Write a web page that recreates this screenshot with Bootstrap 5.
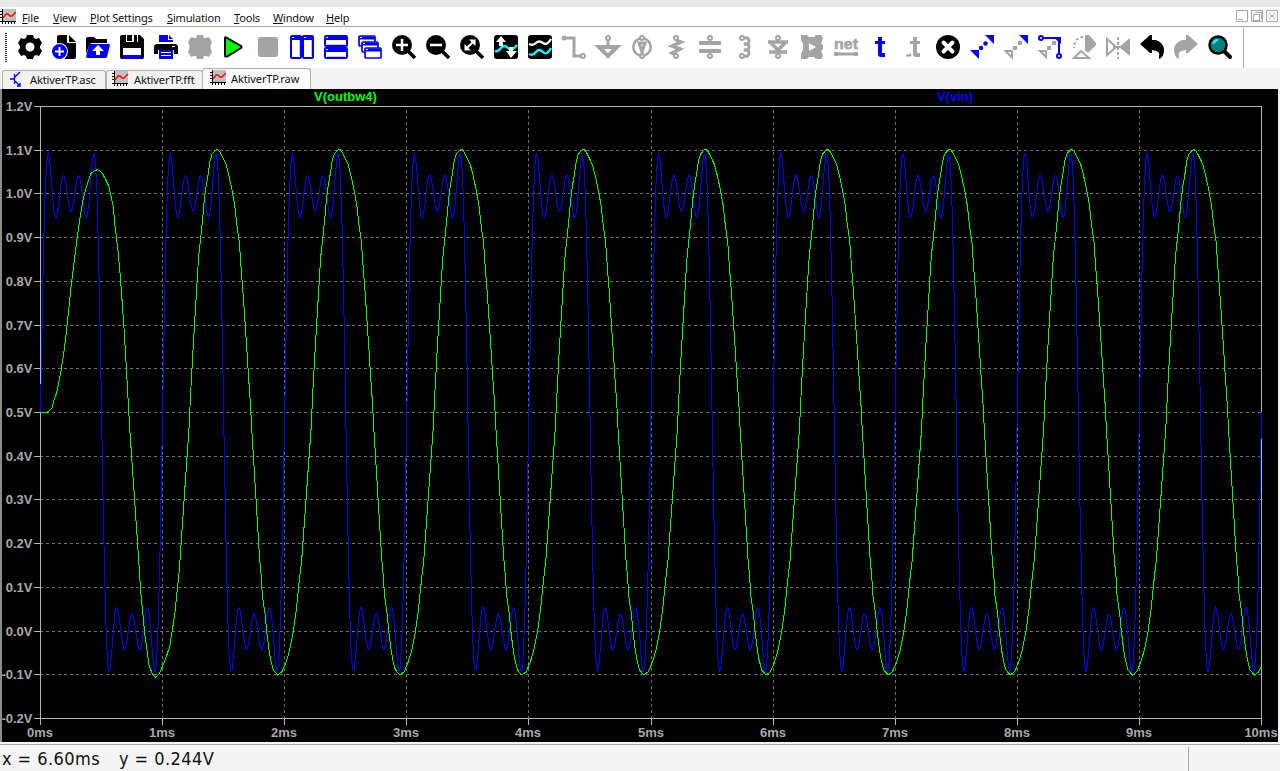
<!DOCTYPE html>
<html lang="en">
<head>
<meta charset="utf-8">
<title>AktiverTP.raw</title>
<meta name="viewport" content="width=device-width, initial-scale=1">
<link href="https://cdn.jsdelivr.net/npm/bootstrap@5.3.0/dist/css/bootstrap.min.css" rel="stylesheet">
<style>
body{width:1280px;height:771px;overflow:hidden;background:#f4f4f4;color:#111;font-family:"Noto Sans","Open Sans",sans-serif;font-size:11px;line-height:1}
.topstrip{height:7px;background:#e8e8e8}
.menurow{height:20px;background:#fff;border-bottom:1px solid #a8a8a8}
.menurow .nav-link{padding:0;color:#111;position:static;line-height:19px;white-space:nowrap;letter-spacing:-.17px}
.menurow .nav-link::first-letter{text-decoration:underline}
.toolrow{height:41px;background:#fff}
.toolrow svg{width:24px;height:24px;flex:none;overflow:visible}
.grip{width:2px;height:30px;margin:6px 11px 0 5px;background:repeating-linear-gradient(#222 0 1px,#fff 1px 2px)}
.toolend{width:1px;height:40px;background:#a8a8a8}
.tabrow{height:21px;background:#f4f4f4;padding-left:2px}
.doc-tab{height:19px;margin-top:2px;border:1px solid #b0b0b0;border-bottom:0;border-radius:3px 3px 0 0;background:#f2f2f2;white-space:nowrap;letter-spacing:-.1px}
.doc-tab.current{height:21px;margin-top:0;background:#fafafa}
.plotarea{height:653px;background:#000;border-left:2px solid #8c8c8c;border-right:2px solid #f4f4f4}
.plotarea text{font:bold 13px "Liberation Sans",sans-serif;fill:#a8a8a8}
.statusrow{height:27px;border-top:1px solid #a8a8a8;margin-top:2px;font-family:"DejaVu Sans Condensed","DejaVu Sans",sans-serif;font-stretch:condensed;font-size:18px;letter-spacing:.45px}
</style>
</head>
<body class="d-flex flex-column">
<svg width="0" height="0" class="position-absolute"><defs>
<g id="wave"><path fill="#c0c0c0" d="M2 0h14v12H2z"/><path d="M2.500 0v15M0 12.500h16M0 2.500h3M0 5.500h3M0 8.500h3M5.500 12v3M8.500 12v3M11.500 12v3M14.500 12v3" stroke="#000" fill="none" shape-rendering="crispEdges"/><path d="M3 9l3-4 2 0 2 2 2 0 4-4" fill="none" stroke="red" stroke-width="1.3"/></g>
<g id="win"><rect x="1" y="1" width="10" height="22" rx="1" fill="#fff" stroke="#00f" stroke-width="2"/></g>
</defs></svg>
<div class="topstrip flex-shrink-0"></div>
<nav class="menurow d-flex flex-shrink-0">
<svg width="16" height="17" class="flex-shrink-0"><use href="#wave" y="2"/></svg>
<div class="d-flex" id="menu"></div>
<svg class="ms-auto" width="46" height="19" fill="none" stroke="#a8a8a8" shape-rendering="crispEdges"><path d="M2.500 3.500h11v11h-11zM17.500 3.500h11v11h-11zM32.500 3.500h11v11h-11zM4 12.500h5M19.500 7.500h6v6h-6zM21 5.500h6v6"/><path d="M35 6l6 6M41 6l-6 6" shape-rendering="auto"/></svg>
</nav>
<div class="toolrow d-flex flex-shrink-0">
<div class="grip flex-shrink-0"></div>
<div class="d-flex align-items-start" style="gap:10px;padding-top:8px">
<svg viewBox="0 0 24 24"><path fill-rule="evenodd" d="M8 3l1-3h6l1 3 2 1 3-1 3 5-2 3v2l2 3-3 5-3-1-2 1-1 3H9l-1-3-2-1-3 1-3-5 2-3v-2L0 8l3-5 3 1zM12 7.500a4.500 4.500 0 1 0 0 9 4.500 4.500 0 0 0 0-9z"/></svg>
<svg viewBox="0 0 24 24"><path d="M5 2q0-2 2-2h8v8h9v14q0 2-2 2H13L5 12zM17 0l7 7h-7z"/><circle cx="7.500" cy="16.500" r="8.500" fill="#fff"/><circle cx="7.500" cy="16.500" r="7.500" fill="#00f"/><path d="M7.500 12v9M3 16.500h9" stroke="#fff" stroke-width="2"/></svg>
<svg viewBox="0 0 24 24"><path d="M0 19V4q0-2 2-2h6l2 2h11v4H6q-2 0-3 3z"/><path d="M4 9h19l1 1-3 12-1 1H1L0 22l3-12z" fill="#00f"/><path d="M12 10l6 6h-4v4h-4v-4H6z" fill="#fff"/></svg>
<svg viewBox="0 0 24 24"><path d="M2 0h18l4 4v18q0 2-2 2H2q-2 0-2-2V2Q0 0 2 0z"/><path fill="#fff" d="M6 0h12v7H6zM3 13h18v11H3z"/><path d="M7 0h5v6H7zM14 0h3v7h-3z"/><path fill="#00f" d="M3 20h18v4H3z"/></svg>
<svg viewBox="0 0 24 24"><path fill="#00f" d="M5 0h9v5h5v2H5zM15 0l4 4h-4z"/><path d="M2 9h20l2 2v8h-4v-4H4v4H0v-8z"/><path fill="#00f" d="M5 15h14v9H5z"/><path stroke="#fff" d="M7 17.500h10M7 20.500h10M18 11.500h3"/></svg>
<svg viewBox="0 0 24 24"><path fill="#a4a4a4" d="M8 3l1-3h6l1 3 2 0 3-1 3 5-1.500 4v2L24 17l-3 5-3-1-2 0-1 3H9l-1-3H6l-3 1-3-5 1.500-4v-2L0 7l3-5 3 1z"/></svg>
<svg viewBox="0 0 24 24"><path d="M3 3q0-1 1-.500l15 8.500q1 1 0 2L5 21.500q-2 .5-2-1z" fill="#0f0" stroke="#000" stroke-width="2"/></svg>
<svg viewBox="0 0 24 24"><rect x="2" y="2" width="20" height="20" rx="3" fill="#a4a4a4"/></svg>
<svg viewBox="0 0 24 24"><use href="#win"/><use href="#win" x="12"/><path stroke="#00f" stroke-width="4" d="M0.500 3h23"/><path stroke="#fff" d="M2 2.500h2M14 2.500h2"/><path stroke="#ccc" d="M9.500 5v16M21.500 5v16"/></svg>
<svg viewBox="0 0 24 24"><g fill="#fff" stroke="#00f" stroke-width="2"><rect x="1" y="1" width="22" height="10" rx="1"/><rect x="1" y="13" width="22" height="10" rx="1"/></g><path stroke="#00f" stroke-width="4" d="M1 3h22M1 15h22"/><path stroke="#fff" d="M2 2.500h2M2 14.500h2"/><path stroke="#ccc" d="M3 9.500h18M3 21.500h18"/></svg>
<svg viewBox="0 0 24 24"><g fill="#fff" stroke="#00f" stroke-width="1.700"><rect x="1" y="1" width="16" height="10" rx="1"/><path d="M1 3h16" stroke-width="3"/><rect x="4" y="7" width="16" height="10" rx="1"/><path d="M4 9h16" stroke-width="3"/><rect x="7" y="13" width="16" height="10" rx="1"/><path d="M7 15h16" stroke-width="3"/></g><path stroke="#fff" d="M2 2.500h2M5 8.500h2M8 14.500h2"/></svg>
<svg viewBox="0 0 24 24"><circle cx="10" cy="10" r="10"/><path d="M16 16l7 7" stroke="#000" stroke-width="3.500"/><path d="M10 4v12M4 10h12" stroke="#fff" stroke-width="2.500"/></svg>
<svg viewBox="0 0 24 24"><circle cx="10" cy="10" r="10"/><path d="M16 16l7 7" stroke="#000" stroke-width="3.500"/><path d="M4 10h12" stroke="#fff" stroke-width="2.500"/></svg>
<svg viewBox="0 0 24 24"><circle cx="10" cy="10" r="10"/><path d="M16 16l7 7" stroke="#000" stroke-width="3.500"/><path d="M7 13l6-6" stroke="#fff" stroke-width="2"/><path fill="#fff" d="M9 4.500h6.500V11zM4.500 9v6.500H11z"/></svg>
<svg viewBox="0 0 24 24"><rect width="24" height="24" rx="3"/><path d="M1 16q3 1 6-3t7 0 9-3" fill="none" stroke="#0ff" stroke-width="2.400"/><path fill="#fff" d="M7 1l5 6H9v4H5V7H2zM15 12h4v4h4l-6 7-5-7h3z"/></svg>
<svg viewBox="0 0 24 24"><rect width="24" height="24" rx="3"/><path d="M1 9q4 2 7-1t7 0 8-4" fill="none" stroke="#fff" stroke-width="2.200"/><path d="M1 19q4 2 7-2t7 0 8-4" fill="none" stroke="#0ff" stroke-width="2.400"/></svg>
<svg viewBox="0 0 24 24" fill="none" stroke="#a4a4a4" stroke-width="3"><path d="M2 3h10v18h7"/><circle cx="2" cy="3" r="1"/><circle cx="21" cy="21" r="2" fill="#fff" stroke-width="1.800"/></svg>
<svg viewBox="0 0 24 24" fill="none" stroke="#a4a4a4"><circle cx="12" cy="3" r="2" stroke-width="2"/><path d="M12 5v7" stroke-width="3"/><path d="M3 12h18L12 21z" stroke-width="4"/></svg>
<svg viewBox="0 0 24 24" fill="none" stroke="#a4a4a4"><circle cx="12" cy="12" r="8.700" stroke-width="2.600"/><circle cx="12" cy="3" r="2" fill="#fff" stroke-width="2"/><circle cx="12" cy="21" r="2" fill="#fff" stroke-width="2"/><path d="M9 8h6l-3 9z" stroke-width="3"/></svg>
<svg viewBox="0 0 24 24" fill="none" stroke="#a4a4a4"><path d="M12 5l5 2-9 4 8 3-8 4 4 2" stroke-width="3.500"/><circle cx="12" cy="3" r="2" fill="#fff" stroke-width="2"/><circle cx="12" cy="21" r="2" fill="#fff" stroke-width="2"/></svg>
<svg viewBox="0 0 24 24" fill="none" stroke="#a4a4a4"><path d="M1 8h22M1 16h22" stroke-width="4"/><circle cx="12" cy="3" r="2" fill="#fff" stroke-width="2"/><circle cx="12" cy="21" r="2" fill="#fff" stroke-width="2"/></svg>
<svg viewBox="0 0 24 24" fill="none" stroke="#a4a4a4"><path d="M12 3q5-1 5 3t-5 3q5-1 5 3t-5 3q5-1 5 3t-5 3" stroke-width="3"/><circle cx="10" cy="3" r="2" fill="#fff" stroke-width="2"/><circle cx="10" cy="21" r="2" fill="#fff" stroke-width="2"/></svg>
<svg viewBox="0 0 24 24" fill="none" stroke="#a4a4a4"><path d="M2 7h20M3 17h18M5 8l7 7 7-7" stroke-width="3.500"/><circle cx="12" cy="3" r="2" fill="#fff" stroke-width="2"/><circle cx="12" cy="21" r="2" fill="#fff" stroke-width="2"/></svg>
<svg viewBox="0 0 24 24"><path fill-rule="evenodd" fill="#a4a4a4" d="M1 0h6l2 2h5l2-2h5l2 3-2 5 2 2v4l-2 2 2 5-2 3h-5l-2-2H9l-2 2H1v-5l2-4V9L1 5zM9 8v8l7-4z"/></svg>
<svg viewBox="0 0 24 24"><text x="0" y="14" font-family="Liberation Sans,sans-serif" font-size="15" font-weight="700" fill="#a4a4a4" stroke="#a4a4a4" stroke-width=".5" textLength="24" lengthAdjust="spacingAndGlyphs">net</text><path d="M2 19h20" stroke="#a4a4a4" stroke-width="3"/><circle cx="2" cy="19" r="2.300" fill="#a4a4a4"/><circle cx="22" cy="19" r="2.300" fill="#a4a4a4"/></svg>
<svg viewBox="0 0 24 24"><path d="M10 2h4v4h3v3h-3v9h3v4h-4q-3 0-3-3V9H7V6h3z" fill="#00f"/></svg>
<svg viewBox="0 0 24 24"><path d="M11 2h4v4h3v3h-3v9h3v4h-4q-3 0-3-3V9H8V6h3z" fill="#a4a4a4"/><path d="M4 20.500h4" stroke="#a4a4a4" stroke-width="2"/><circle cx="8" cy="20" r="1.500" fill="#a4a4a4"/></svg>
<svg viewBox="0 0 24 24"><circle cx="12" cy="12" r="12"/><path d="M7.500 7.500l9 9M16.500 7.500l-9 9" stroke="#fff" stroke-width="4" stroke-linecap="round"/></svg>
<svg viewBox="0 0 24 24"><g fill="#00f"><path d="M15 0h9v9zM0 15h9v9z"/><circle cx="15.500" cy="8.500" r="2.200"/><circle cx="11" cy="13" r="2.200"/></g></svg>
<svg viewBox="0 0 24 24"><path d="M15 0h9v9z" fill="#00f"/><path d="M1.500 16H8v6.500z" fill="none" stroke="#a4a4a4" stroke-width="2"/><path d="M9 11h4v4H9zM14 6h4v4h-4z" fill="#a4a4a4"/></svg>
<svg viewBox="0 0 24 24"><path d="M15 2h8v7z" fill="#00f"/><g fill="none" stroke="#00f" stroke-width="2"><path d="M5 3h16v16"/><circle cx="3" cy="3" r="2"/><circle cx="21" cy="21" r="2"/></g><path d="M2 16h6v6z" fill="none" stroke="#a4a4a4" stroke-width="2"/><path d="M9 11h4v4H9zM14 6h4v4h-4z" fill="#a4a4a4"/></svg>
<svg viewBox="0 0 24 24"><path d="M13 0h4l7 8v2l-8 8-3-3z" fill="#a4a4a4"/><path d="M11 2q-9 1-9 11" fill="none" stroke="#a4a4a4" stroke-width="2" stroke-dasharray="2.500"/><path d="M2 23l7-7 8 7z" fill="#fff" stroke="#a4a4a4" stroke-width="2"/></svg>
<svg viewBox="0 0 24 24"><path d="M1 4l9 8-9 8z" fill="none" stroke="#a4a4a4" stroke-width="2"/><path d="M24 3v18L13 12z" fill="#a4a4a4"/><path d="M12 2v22" stroke="#a4a4a4" stroke-width="2" stroke-dasharray="3 2"/><path d="M7 12h9" stroke="#a4a4a4" stroke-width="2"/></svg>
<svg viewBox="0 0 24 24"><path d="M0 9L10 0h2v5h4q8 3 8 10 0 7-5 9v-3q2-5-7-6v3h-2z"/></svg>
<svg viewBox="0 0 24 24"><path fill="#a4a4a4" d="M24 9L14 0h-2v5H8Q0 8 0 15q0 7 5 9v-3q-2-5 7-6v3h2z"/></svg>
<svg viewBox="0 0 24 24"><path d="M17 17l5 5" stroke="#000" stroke-width="4" stroke-linecap="round"/><circle cx="10" cy="10" r="8.500" fill="#008080" stroke="#000" stroke-width="2.500"/><path d="M5 9q1-4 5-4M5 8l3-2" fill="none" stroke="#0ff" stroke-width="2"/></svg>
</div>
<div class="toolend" style="margin:1px 0 0 11px"></div>
</div>
<div class="tabrow d-flex flex-shrink-0">
<div class="doc-tab d-flex" style="width:104px"><svg width="22" height="17" class="flex-shrink-0"><path d="M7 8h4.500M11.500 3v10M12 6l5-5M12 10l5 5M17 12v3h-3" fill="none" stroke="#00f" stroke-width="1.300"/></svg><span style="margin:3px 0 0 5px">AktiverTP.asc</span></div>
<div class="doc-tab d-flex" style="width:97px"><svg width="22" height="17" class="flex-shrink-0"><use href="#wave" x="5" y="0"/></svg><span style="margin:3px 0 0 5px">AktiverTP.fft</span></div>
<div class="doc-tab current d-flex" style="width:109px;margin-left:-1px"><svg width="24" height="17" class="flex-shrink-0"><use href="#wave" x="7" y="1"/></svg><span style="margin:4px 0 0 4px">AktiverTP.raw</span></div>
</div>
<main class="plotarea flex-shrink-0"><svg id="plot" class="d-block" width="1276" height="653" viewBox="2 89 1276 653"></svg></main>
<footer class="statusrow d-flex flex-shrink-0"><span style="width:119px;padding:5px 0 0 2px">x = 6.60ms</span><span style="padding-top:5px;width:1069px">y = 0.244V</span><i style="width:1px;height:24px;margin-top:2px;background:#a8a8a8"></i></footer>
<script>
const menu=[['File',22],['View',53],['Plot Settings',90],['Simulation',167],['Tools',234],['Window',273],['Help',326],['',360]];
document.getElementById('menu').innerHTML=menu.slice(0,-1).map((m,i)=>`<span style="width:${menu[i+1][1]-m[1]}px;${i?'':'margin-left:6px'}"><a class="nav-link d-inline-block" style="padding-top:1px">${m[0]}</a></span>`).join('');
const X=t=>40.5+t*122.1, Y=v=>718.5-(v+.2)*437.143, ax='#b4b4b4';
let s='<g shape-rendering="crispEdges" fill="none">';
for(let i=1;i<14;i++){const y=Math.floor(Y(-.2+i/10))+.5;s+=`<path stroke="#707070" stroke-dasharray="3 3" d="M40 ${y}H1261"/>`}
for(let i=1;i<10;i++){const x=Math.floor(X(i))+.5;s+=`<path stroke="#707070" stroke-dasharray="3 3" d="M${x} 110V718"/>`}
s+=`<path stroke="${ax}" d="M40.500 106.500H1261.500V718.500H40.500z"/>`;
for(let i=0;i<15;i++){const y=Math.floor(Y(-.2+i/10))+.5;s+=`<path stroke="${ax}" d="M34 ${y}h6"/>`}
for(let i=0;i<11;i++){const x=Math.floor(X(i))+.5;s+=`<path stroke="${ax}" d="M${x} 719v6"/>`}
// input: square wave limited to its first four odd harmonics
let b=[];
for(let t=0;t<=10.0001;t+=.008){let v=.5;for(const k of [1,3,5,7])v+=2/Math.PI*Math.sin(k*2*Math.PI*t)/k;b.push(X(t).toFixed(1)+','+Y(v).toFixed(1))}
s+=`<polyline stroke="#00f" points="${b.join(' ')}"/>`;
// filter output: start-up cycle, then a repeating period (thirds of a pixel)
const up=(a,o)=>a.map(p=>[(p[0]+1)/3,p[1]/3+o]);
let g=[...up([[121,967],[141,967],[147,962],[155,955],[161,930],[169,908],[175,878],[181,848],[190,790],[196,745],[201,700],[206,650],[211,600],[219,535],[225,490],[231,440],[237,400],[243,360],[249,325],[256,298],[264,272],[272,250],[281,243],[291,239],[298,242],[305,248],[314,265],[325,288],[333,322],[339,350],[343,400],[348,440],[354,490],[360,560],[366,640],[371,715],[376,800],[380,870],[384,940],[388,1015]],90),...up([[415,0],[418,50],[422,105],[428,165],[433,220],[440,270],[446,315],[455,340],[465,352],[477,342],[487,318],[496,295],[508,260],[516,210],[523,165],[529,105],[535,50],[539,0]],560)];
const cyc=[...up([[566,1015],[569,950],[572,890],[575,835],[578,780],[581,730],[584,680],[587,630],[590,580],[593,530],[596,490],[600,455],[604,415],[608,375],[612,330],[617,290],[623,255],[629,213],[635,193],[643,183],[648,179],[653,179],[658,185],[665,198],[677,223],[686,258],[695,300],[703,345],[710,408],[717,455],[722,530],[727,595],[731,650],[735,710],[740,785],[744,850],[748,910],[751,955],[754,1015]],90),...up([[778,0],[783,50],[786,105],[794,160],[799,215],[806,270],[811,300],[819,330],[832,345],[845,335],[856,310],[868,270],[879,215],[888,150],[893,100],[898,50],[904,0]],560)];
for(let n=0;n<9;n++)for(const p of cyc){const x=p[0]+n*122.1;if(x<1260)g.push([x,p[1]])}
g.push([1261.5,666]);
s+=`<polyline stroke="#0f0" points="${g.map(p=>p[0].toFixed(1)+','+(p[1]).toFixed(1)).join(' ')}"/></g>`;
for(let i=0;i<15;i++){s+=`<text x="32.500" y="${Math.floor(Y(-.2+i/10))+5}" text-anchor="end">${(-.2+i/10).toFixed(1).replace('-0.0','0.0')}V</text>`}
for(let i=0;i<11;i++){s+=`<text x="${Math.floor(X(i))}" y="737" text-anchor="middle">${i}ms</text>`}
s+=`<text x="345.500" y="101" text-anchor="middle" style="fill:#0f0">V(outbw4)</text><text x="955" y="101" text-anchor="middle" style="fill:#00f">V(vin)</text>`;
document.getElementById('plot').innerHTML=s;
</script>
<script src="https://cdn.jsdelivr.net/npm/bootstrap@5.3.0/dist/js/bootstrap.bundle.min.js"></script>
</body>
</html>
